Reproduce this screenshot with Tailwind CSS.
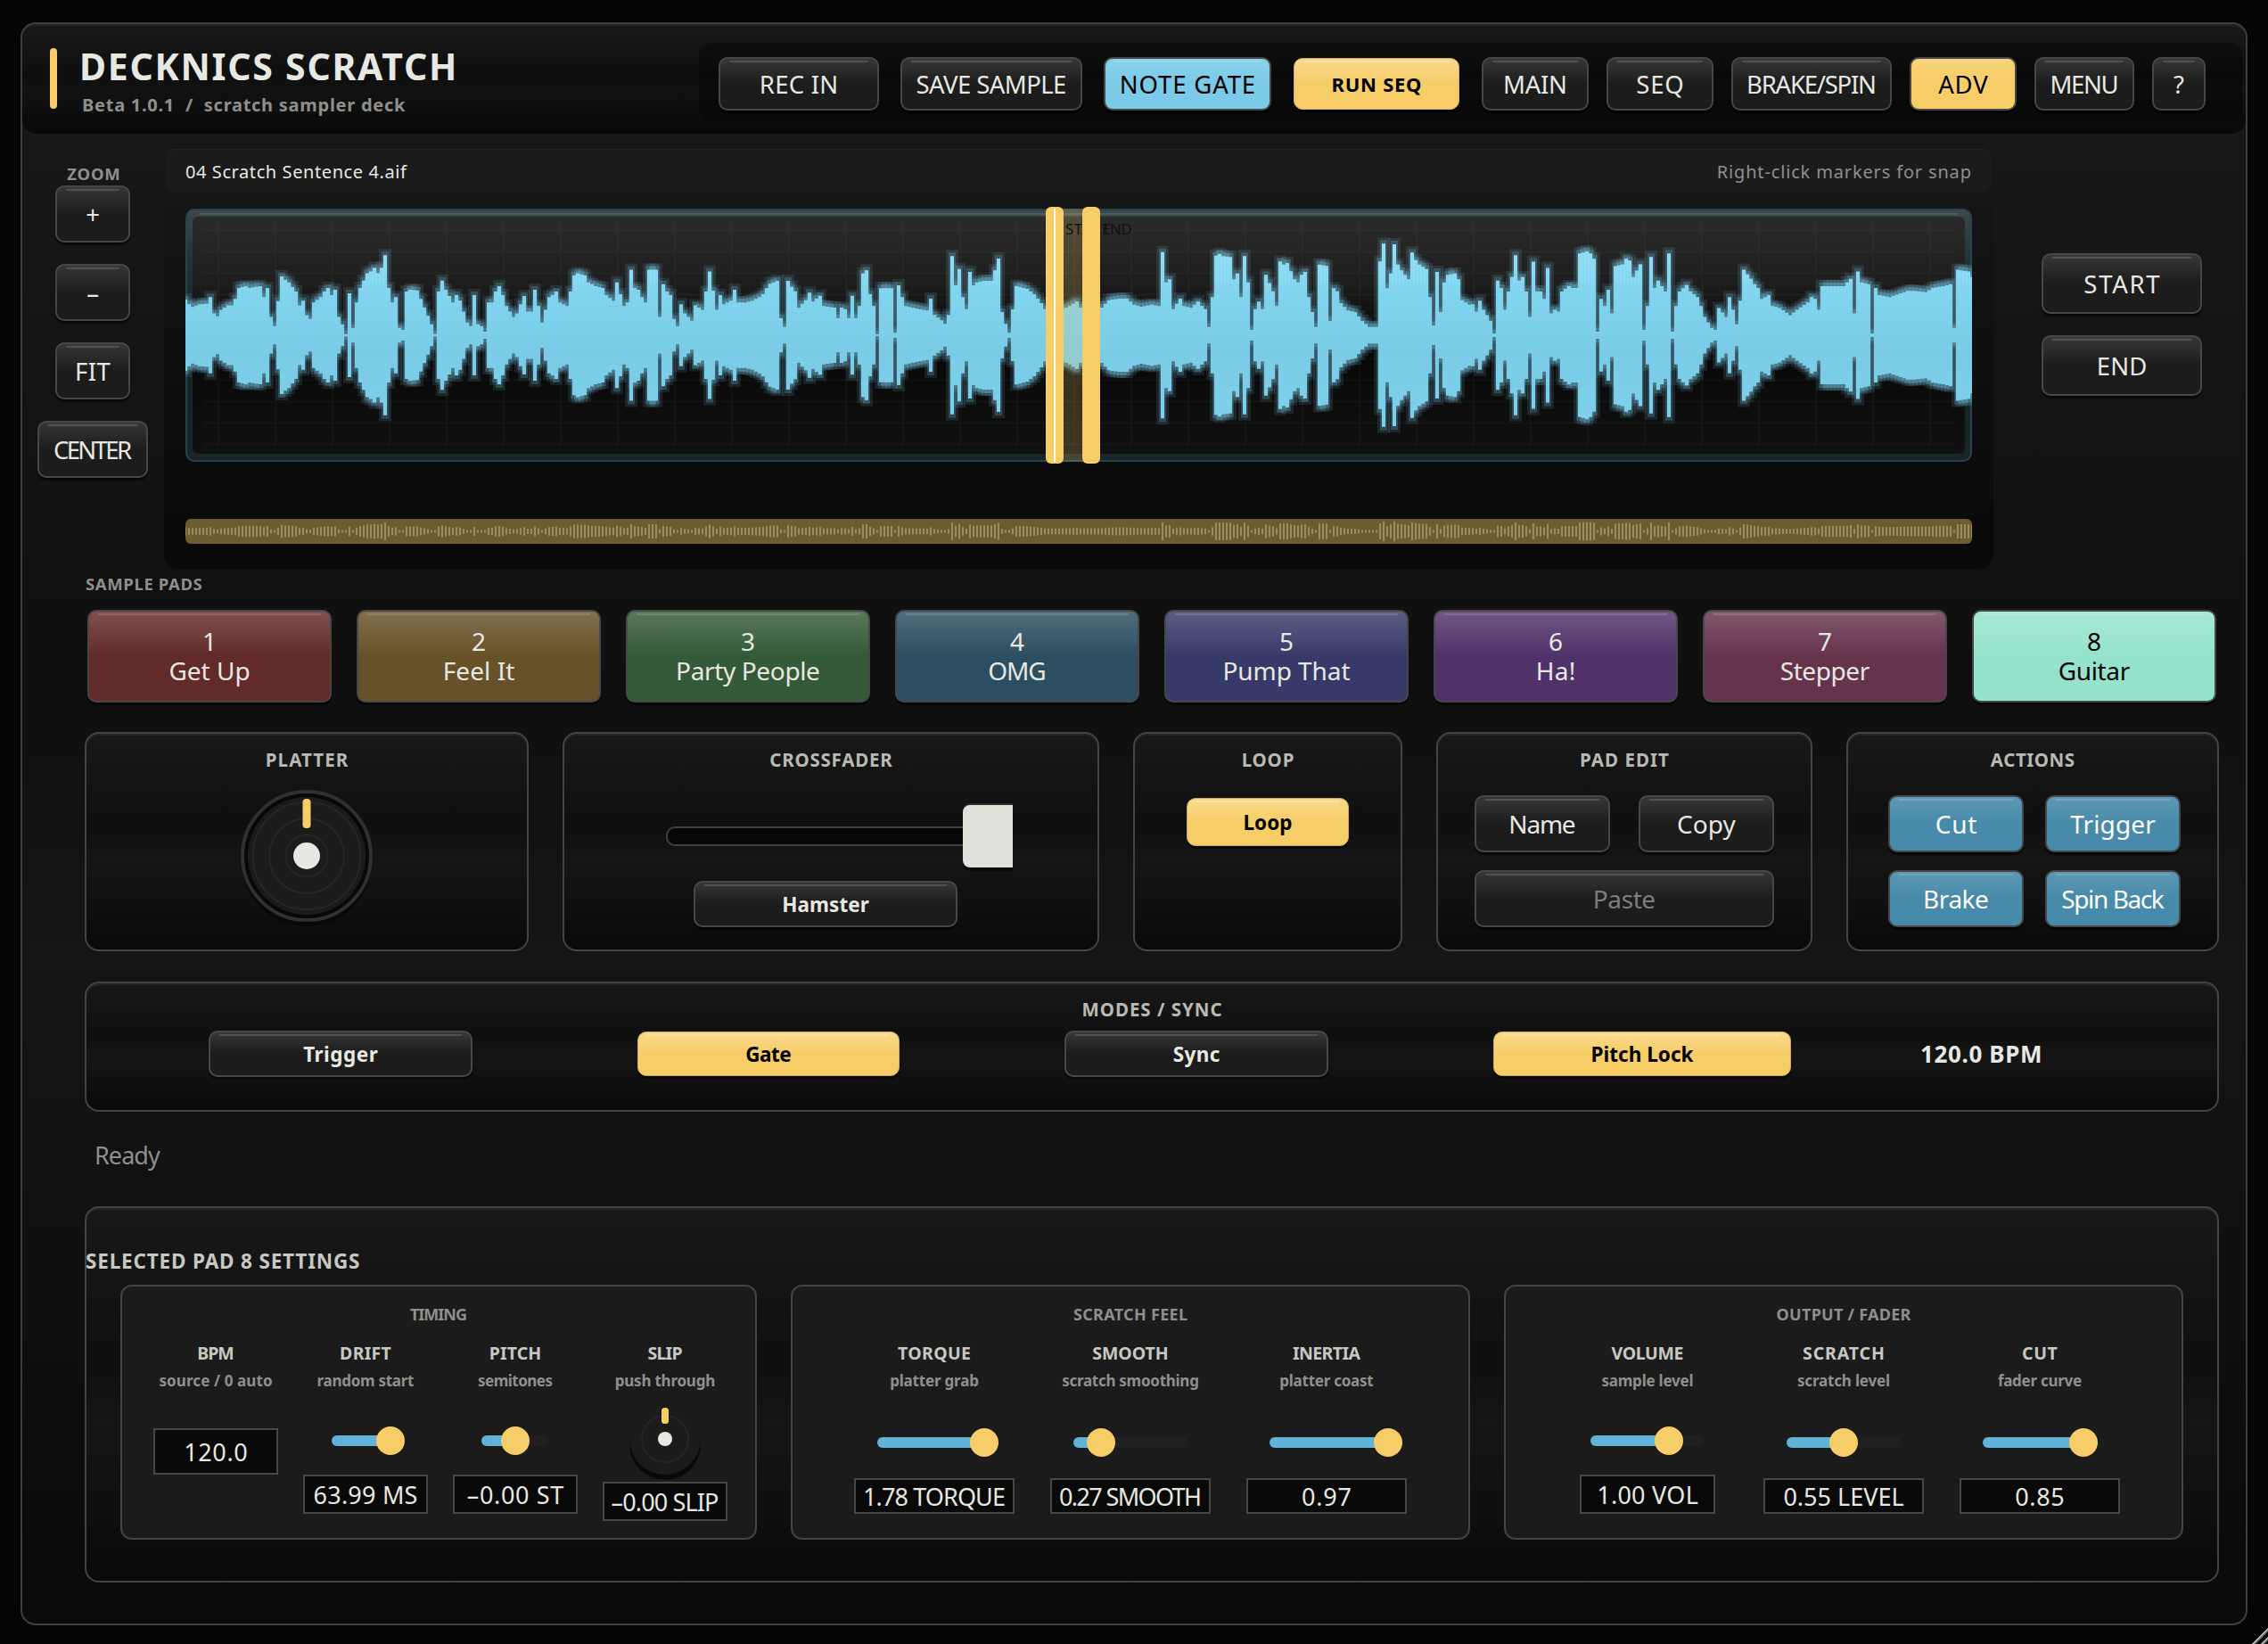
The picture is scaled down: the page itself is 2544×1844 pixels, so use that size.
<!DOCTYPE html>
<html lang="en">
<head>
<meta charset="utf-8">
<title>Decknics Scratch</title>
<script src="https://cdn.jsdelivr.net/npm/@tailwindcss/browser@4"></script>
</head>
<body class="relative w-[2544px] h-[1844px] overflow-hidden bg-[#050505] text-[#e8e8e2] font-['Noto_Sans','Open_Sans',sans-serif] whitespace-nowrap
  [&_button]:relative [&_button]:flex [&_button]:shrink-0 [&_button]:flex-col [&_button]:items-center [&_button]:justify-center [&_button]:rounded-[10px] [&_button]:border-2 [&_button]:border-[#474747] [&_button]:bg-[#1c1c1c] [&_button]:bg-linear-to-b [&_button]:from-white/12 [&_button]:to-transparent [&_button]:to-50% [&_button]:pt-[2px] [&_button]:shadow-[0_3px_1px_#00000090]
  [&_button]:before:absolute [&_button]:before:top-[2px] [&_button]:before:inset-x-[10px] [&_button]:before:h-[2px] [&_button]:before:bg-white/15
  [&_.lit]:m-px [&_.lit]:border [&_.lit]:border-[#cfac5c] [&_.lit]:bg-[#f7cd67] [&_.lit]:from-white/25 [&_.lit]:text-black [&_.lit]:before:bg-white/25">

<div class="mt-[25px] ml-[23px] flex h-[1798px] w-[2498px] flex-col rounded-[17px] border-2 border-[#3f3f3f] bg-[linear-gradient(#191919_0%,#0f0f0f_42%,#151515_58%,#0a0a0a_100%)]">

  <!-- header -->
  <header class="flex h-[123px] shrink-0 items-start rounded-[15px] border-t-2 border-[#262626] bg-[linear-gradient(#191919_0%,#0e0e0e_45%,#121212_58%,#090909_100%)]">
    <div class="mt-[25px] ml-[31px] h-[68px] w-[8px] rounded-full bg-[#f8cd68]"></div>
    <div class="mt-[25px] ml-[22px]">
      <h1 class="ml-[3px] text-[41px] leading-[40px] font-bold"><span data-w="417">DECKNICS SCRATCH</span></h1>
      <p class="mt-[12px] ml-[6px] text-[20px] leading-[24px] font-bold whitespace-pre text-[#8f8f8b]"><span data-w="362">Beta 1.0.1  /  scratch sampler deck</span></p>
    </div>
    <nav class="mt-[19px] mr-[4px] ml-auto flex h-[88px] w-[1731px] items-start rounded-[14px] bg-black/30 pt-[16px] pl-[22px] text-[27.5px]">
      <button class="h-[60px] w-[180px]"><span data-w="84.5">REC IN</span></button>
      <button class="ml-[24px] h-[60px] w-[204px]"><span data-w="166.5">SAVE SAMPLE</span></button>
      <button class="ml-[24px] h-[60px] w-[188px] bg-[#7bcae8]! text-black"><span data-w="149">NOTE GATE</span></button>
      <div class="ml-[24px] text-[22px] font-bold"><button class="lit h-[58px] w-[186px] pt-0!"><span data-w="99.5">RUN SEQ</span></button></div>
      <div class="ml-[24px] flex gap-[20px]">
        <button class="h-[60px] w-[120px]"><span data-w="68">MAIN</span></button>
        <button class="h-[60px] w-[120px]"><span data-w="51">SEQ</span></button>
        <button class="h-[60px] w-[180px]"><span data-w="142">BRAKE/SPIN</span></button>
        <button class="h-[60px] w-[120px] bg-[#f7cd67]! text-black"><span data-w="56">ADV</span></button>
        <button class="h-[60px] w-[112px]"><span data-w="73">MENU</span></button>
        <button class="h-[60px] w-[60px]"><span>?</span></button>
      </div>
    </nav>
  </header>

  <!-- waveform row -->
  <section class="mt-[16px] flex h-[472px] shrink-0">
    <div class="mr-[2px] flex w-[157px] flex-col items-center gap-[24px] pt-[19px] pl-[1px] text-[27.5px]">
      <div class="-mb-[21px] ml-[2px] text-[18.5px] leading-[20px] font-bold text-[#8f8f8b]"><span data-w="58">ZOOM</span></div>
      <button class="h-[64px] w-[84px]">+</button>
      <button class="h-[64px] w-[84px]">–</button>
      <button class="h-[64px] w-[84px]"><span data-w="37.5">FIT</span></button>
      <button class="h-[64px] w-[124px]"><span data-w="87">CENTER</span></button>
    </div>

    <div class="flex w-[2052px] flex-col rounded-[16px] bg-linear-to-b from-black/0 to-black/50">
      <div class="mx-[2px] mt-px flex h-[49px] items-center justify-between rounded-[10px] border-t border-[#252525] bg-[#1b1b1b] pt-[1px] pr-[23px] pl-[22px] text-[20px]">
        <span data-w="249">04 Scratch Sentence 4.aif</span>
        <span class="text-[#8f8f8b]" data-w="284">Right-click markers for snap</span>
      </div>
      <div class="relative mx-[24px] mt-[18px] h-[284px] rounded-[10px] border-2 border-[#274350] bg-[linear-gradient(#3c484b_0%,#253235_20%,#182123_50%,#1b2628_100%)]">
        <div class="mx-[6px] mt-[7px] h-[266px] rounded-[6px] bg-[linear-gradient(#2b2b2b_0%,#1d1d1d_28%,#070707_50%,#080808_60%,#111111_100%)]"></div>
        <div class="absolute top-[3px] right-[14px] left-[14px] h-[2px] bg-white/12"></div>
        <svg id="wave" class="absolute -top-[2px] -left-[2px] overflow-visible" width="2004" height="284" viewBox="208 234 2004 284">
          <defs>
            <linearGradient id="core" gradientUnits="userSpaceOnUse" x1="0" y1="280" x2="0" y2="472">
              <stop offset="0" stop-color="#96e2f8"/><stop offset=".25" stop-color="#83d6ef"/><stop offset=".6" stop-color="#7bcde7"/><stop offset="1" stop-color="#7fd2ec"/>
            </linearGradient>
            <clipPath id="frame"><rect x="208" y="234" width="2004" height="284" rx="10"/></clipPath>
          </defs>
          <path id="grid" stroke="#b8dcd8" stroke-opacity=".035" stroke-width="2" fill="none"/>
          <g clip-path="url(#frame)" fill="none">
            <g id="glow" stroke="#7bcae8" stroke-linecap="square"></g>
            <path class="env" stroke="url(#core)" stroke-width="4"/>
            <path class="env" stroke="#6fbfdc" stroke-opacity=".3" stroke-width="1"/>
          </g>
          <rect x="1183" y="234" width="41" height="284" fill="#f7cd67" fill-opacity=".2"/>
          <text x="1195" y="263" font-size="17" fill="#121212" textLength="50">START</text>
          <rect x="1173" y="232" width="20" height="288" rx="6" fill="#f7cd67"/>
          <rect x="1182" y="234" width="2" height="284" fill="#fff"/>
          <rect x="1214" y="232" width="20" height="288" rx="6" fill="#f7cd67"/>
          <text x="1236" y="263" font-size="17" fill="#121212" textLength="34">END</text>
        </svg>
      </div>
      <svg class="mx-[24px] mt-[64px] rounded-[6px] bg-[#6c5c30]" width="2004" height="28" viewBox="208 582 2004 28"><path id="mini" stroke="#998d63" stroke-width="2" fill="none"/></svg>
    </div>

    <div class="ml-[54px] flex flex-col gap-[24px] pt-[118px] text-[27.5px]">
      <button class="h-[68px] w-[180px]"><span data-w="84">START</span></button>
      <button class="h-[68px] w-[180px]"><span data-w="53.5">END</span></button>
    </div>
  </section>

  <div class="ml-[70px] flex w-[2394px] flex-col">
    <!-- pads -->
    <h2 class="mt-[7px] ml-[1px] text-[18.5px] leading-[20px] font-bold text-[#8f8f8b]"><span data-w="130.6">SAMPLE PADS</span></h2>
    <div class="mx-[3px] mt-[19px] grid grid-cols-8 gap-[28px] text-[28px] leading-[33px] [&_button]:h-[104px] [&_button]:from-white/18 [&_button]:pt-0!">
      <button class="bg-[#632a2a]!"><span>1</span><span data-w="89">Get Up</span></button>
      <button class="bg-[#675128]!"><span>2</span><span data-w="78.5">Feel It</span></button>
      <button class="bg-[#345a37]!"><span>3</span><span data-w="159">Party People</span></button>
      <button class="bg-[#2b4f60]!"><span>4</span><span data-w="63">OMG</span></button>
      <button class="bg-[#373a68]!"><span>5</span><span data-w="141">Pump That</span></button>
      <button class="bg-[#51316a]!"><span>6</span><span data-w="41">Ha!</span></button>
      <button class="bg-[#66334c]!"><span>7</span><span data-w="100">Stepper</span></button>
      <button class="bg-[#95e3cc]! text-black"><span>8</span><span data-w="80">Guitar</span></button>
    </div>

    <!-- control panels -->
    <div class="mt-[33px] flex gap-[38px] [&>section]:flex [&>section]:h-[246px] [&>section]:flex-col [&>section]:items-center [&>section]:rounded-[16px] [&>section]:border-2 [&>section]:border-[#444444] [&>section]:bg-[linear-gradient(#181818_0%,#0f0f0f_42%,#151515_58%,#0a0a0a_100%)] [&>section]:pt-[17px] [&>section]:shadow-[inset_0_2px_0_#252525] [&_h3]:text-[20.5px] [&_h3]:leading-[24px] [&_h3]:font-bold [&_h3]:text-[#b9b9b3]">
      <section class="w-[498px]">
        <h3><span data-w="92">PLATTER</span></h3>
        <svg class="mt-[22px] overflow-visible" width="148" height="148" viewBox="-74 -74 148 148" fill="none">
          <circle cy="6" r="73" fill="#080808"/>
          <circle r="72" fill="#080808" stroke="#303032" stroke-width="4"/>
          <circle r="66" fill="#1b1b1b"/>
          <g stroke="#262627" stroke-width="2"><circle r="60.500"/><circle r="42"/><circle r="23.500"/></g>
          <rect x="-4.500" y="-64" width="9" height="33" rx="4" fill="#f7cd67"/>
          <circle r="15" fill="#e8e8e2"/>
        </svg>
      </section>
      <section class="w-[602px]">
        <h3><span data-w="137">CROSSFADER</span></h3>
        <div class="mt-[39px] ml-[114px] flex h-[70px] items-start self-start">
          <div class="mt-[24px] h-[22px] w-[333px] rounded-l-[10px] border-2 border-r-0 border-[#3f3f41] bg-[#070707]"></div>
          <div class="h-[70px] w-[56px] rounded-l-[8px] bg-[#e1e1db] shadow-[0_4px_0_#0a0a0a,0_-2px_0_#2a2a2a]"></div>
        </div>
        <button class="mt-[15px] ml-[145px] h-[52px] w-[296px] self-start text-[22.5px] font-bold"><span data-w="95.5">Hamster</span></button>
      </section>
      <section class="w-[302px] text-[22.5px] font-bold">
        <h3><span data-w="57">LOOP</span></h3>
        <div class="mt-[30px]"><button class="lit h-[54px] w-[182px]"><span data-w="54">Loop</span></button></div>
      </section>
      <section class="w-[422px]">
        <h3><span data-w="99">PAD EDIT</span></h3>
        <div class="mt-[28px] grid w-[336px] grid-cols-2 gap-x-[32px] gap-y-[20px] text-[28px] [&_button]:h-[64px] [&_button]:pt-0!">
          <button><span data-w="72.5">Name</span></button>
          <button><span data-w="65.5">Copy</span></button>
          <button class="col-span-2 text-[#7d7d7a]"><span data-w="67.5">Paste</span></button>
        </div>
      </section>
      <section class="w-[418px]">
        <h3><span data-w="94">ACTIONS</span></h3>
        <div class="mt-[28px] ml-[45px] grid w-[328px] grid-cols-2 gap-x-[24px] gap-y-[20px] self-start text-[28px] text-white [&_button]:h-[64px] [&_button]:pt-0!">
          <button class="bg-[#488aaa]!"><span data-w="45.5">Cut</span></button>
          <button class="bg-[#488aaa]!"><span data-w="96">Trigger</span></button>
          <button class="bg-[#488aaa]!"><span data-w="71">Brake</span></button>
          <button class="bg-[#488aaa]!"><span data-w="114.5">Spin Back</span></button>
        </div>
      </section>
    </div>

    <!-- modes -->
    <section class="mt-[34px] flex h-[146px] flex-col rounded-[16px] border-2 border-[#444444] bg-[linear-gradient(#181818_0%,#0f0f0f_42%,#151515_58%,#0a0a0a_100%)] pt-[17px] font-bold shadow-[inset_0_2px_0_#252525]">
      <h3 class="text-center text-[20.5px] leading-[24px] text-[#b9b9b3]"><span data-w="156">MODES / SYNC</span></h3>
      <div class="mt-[12px] ml-[137px] flex items-center text-[22.5px]">
        <button class="h-[52px] w-[296px]"><span data-w="83.5">Trigger</span></button>
        <div class="ml-[184px]"><button class="lit h-[50px] w-[294px]"><span data-w="50">Gate</span></button></div>
        <button class="ml-[184px] h-[52px] w-[296px]"><span data-w="51">Sync</span></button>
        <div class="ml-[184px]"><button class="lit h-[50px] w-[334px]"><span data-w="114">Pitch Lock</span></button></div>
        <div class="ml-[144px] text-[26px] leading-none"><span data-w="134">120.0 BPM</span></div>
      </div>
    </section>

    <p class="mt-[33px] ml-[11px] text-[27px] leading-[32px] text-[#8f8f8b]"><span data-w="72">Ready</span></p>

    <!-- selected pad settings -->
    <section class="mt-[41px] h-[422px] rounded-[16px] border-2 border-[#444444] bg-[linear-gradient(#181818_0%,#0f0f0f_42%,#151515_58%,#0a0a0a_100%)] pt-[48px] shadow-[inset_0_2px_0_#252525]
      [&_h3]:mt-[21px] [&_h3]:text-center [&_h3]:text-[18px] [&_h3]:leading-[20px] [&_h3]:font-bold [&_h3]:text-[#8f8f8b]
      [&_h4]:mt-[24px] [&_h4]:text-[19.5px] [&_h4]:leading-[20px] [&_h4]:font-bold [&_h4]:text-[#c8c8c2]
      [&_p]:-mb-px [&_p]:mt-[11px] [&_p]:text-[17px] [&_p]:leading-[20px] [&_p]:font-bold [&_p]:text-[#8f8f8b]
      [&_output]:flex [&_output]:items-center [&_output]:justify-center [&_output]:border-2 [&_output]:border-[#474747] [&_output]:bg-[#090909] [&_output]:text-[27px] [&_output]:leading-none">
      <h2 class="-ml-[1px] text-[22.5px] leading-[24px] font-bold text-[#c8c8c2]"><span data-w="306">SELECTED PAD 8 SETTINGS</span></h2>
      <div class="mt-[14px] ml-[38px] flex gap-[38px] [&>div]:h-[286px] [&>div]:rounded-[13px] [&>div]:border-2 [&>div]:border-[#444444] [&>div]:bg-[#1b1b1b]">

        <div class="w-[714px]">
          <h3><span data-w="63">TIMING</span></h3>
          <div class="ml-[21px] flex [&>div]:flex [&>div]:w-[168px] [&>div]:flex-col [&>div]:items-center">
            <div>
              <h4><span data-w="39">BPM</span></h4><p><span data-w="126.5">source / 0 auto</span></p>
              <output class="mt-[44px] h-[52px] w-[140px]"><span data-w="69">120.0</span></output>
            </div>
            <div>
              <h4><span data-w="56.5">DRIFT</span></h4><p><span data-w="107.6">random start</span></p>
              <div class="relative mt-[42px] flex h-[32px] w-[76px] items-center"><i class="h-[12px] w-full rounded-[6px] bg-[#202020]"></i><i class="absolute h-[12px] rounded-[6px] bg-[#62b1d7]" style="width:66px"></i><i class="absolute -ml-[16px] size-[32px] rounded-full bg-[#f7cd67]" style="left:66px"></i></div>
              <output class="mt-[22px] h-[44px] w-[140px]"><span data-w="115">63.99 MS</span></output>
            </div>
            <div>
              <h4><span data-w="56.5">PITCH</span></h4><p><span data-w="83.5">semitones</span></p>
              <div class="relative mt-[42px] flex h-[32px] w-[76px] items-center"><i class="h-[12px] w-full rounded-[6px] bg-[#202020]"></i><i class="absolute h-[12px] rounded-[6px] bg-[#62b1d7]" style="width:38px"></i><i class="absolute -ml-[16px] size-[32px] rounded-full bg-[#f7cd67]" style="left:38px"></i></div>
              <output class="mt-[22px] h-[44px] w-[140px]"><span data-w="107.5">–0.00 ST</span></output>
            </div>
            <div>
              <h4><span data-w="39">SLIP</span></h4><p><span data-w="110.5">push through</span></p>
              <svg class="mt-[16px]" width="88" height="88" viewBox="-44 -40 88 88" fill="none">
                <circle cy="6" r="40" fill="#090909"/><circle r="40" fill="#1b1b1b"/>
                <circle r="26" stroke="#252525" stroke-width="2"/>
                <rect x="-4" y="-35" width="8" height="18" rx="3.500" fill="#f7cd67"/><circle r="8" fill="#e8e8e2"/>
              </svg>
              <output class="h-[44px] w-[140px]"><span data-w="118.5">–0.00 SLIP</span></output>
            </div>
          </div>
        </div>

        <div class="w-[762px]">
          <h3><span data-w="128">SCRATCH FEEL</span></h3>
          <div class="ml-[49px] flex [&>div]:flex [&>div]:w-[220px] [&>div]:flex-col [&>div]:items-center">
            <div>
              <h4><span data-w="81">TORQUE</span></h4><p><span data-w="98">platter grab</span></p>
              <div class="relative mt-[44px] flex h-[32px] w-[128px] items-center"><i class="h-[12px] w-full rounded-[6px] bg-[#202020]"></i><i class="absolute h-[12px] rounded-[6px] bg-[#62b1d7]" style="width:120px"></i><i class="absolute -ml-[16px] size-[32px] rounded-full bg-[#f7cd67]" style="left:120px"></i></div>
              <output class="mt-[24px] h-[40px] w-[180px]"><span data-w="157">1.78 TORQUE</span></output>
            </div>
            <div>
              <h4><span data-w="84.5">SMOOTH</span></h4><p><span data-w="153">scratch smoothing</span></p>
              <div class="relative mt-[44px] flex h-[32px] w-[128px] items-center"><i class="h-[12px] w-full rounded-[6px] bg-[#202020]"></i><i class="absolute h-[12px] rounded-[6px] bg-[#62b1d7]" style="width:31px"></i><i class="absolute -ml-[16px] size-[32px] rounded-full bg-[#f7cd67]" style="left:31px"></i></div>
              <output class="mt-[24px] h-[40px] w-[180px]"><span data-w="157">0.27 SMOOTH</span></output>
            </div>
            <div>
              <h4><span data-w="76.5">INERTIA</span></h4><p><span data-w="104">platter coast</span></p>
              <div class="relative mt-[44px] flex h-[32px] w-[128px] items-center"><i class="h-[12px] w-full rounded-[6px] bg-[#202020]"></i><i class="absolute h-[12px] rounded-[6px] bg-[#62b1d7]" style="width:128px"></i><i class="absolute -ml-[16px] size-[32px] rounded-full bg-[#f7cd67]" style="left:133px"></i></div>
              <output class="mt-[24px] h-[40px] w-[180px]"><span data-w="54.5">0.97</span></output>
            </div>
          </div>
        </div>

        <div class="w-[762px]">
          <h3><span data-w="151">OUTPUT / FADER</span></h3>
          <div class="ml-[49px] flex [&>div]:flex [&>div]:w-[220px] [&>div]:flex-col [&>div]:items-center">
            <div>
              <h4><span data-w="80">VOLUME</span></h4><p><span data-w="102">sample level</span></p>
              <div class="relative mt-[42px] flex h-[32px] w-[128px] items-center"><i class="h-[12px] w-full rounded-[6px] bg-[#202020]"></i><i class="absolute h-[12px] rounded-[6px] bg-[#62b1d7]" style="width:88px"></i><i class="absolute -ml-[16px] size-[32px] rounded-full bg-[#f7cd67]" style="left:88px"></i></div>
              <output class="mt-[22px] h-[44px] w-[152px]"><span data-w="111.5">1.00 VOL</span></output>
            </div>
            <div>
              <h4><span data-w="91">SCRATCH</span></h4><p><span data-w="103">scratch level</span></p>
              <div class="relative mt-[44px] flex h-[32px] w-[128px] items-center"><i class="h-[12px] w-full rounded-[6px] bg-[#202020]"></i><i class="absolute h-[12px] rounded-[6px] bg-[#62b1d7]" style="width:64px"></i><i class="absolute -ml-[16px] size-[32px] rounded-full bg-[#f7cd67]" style="left:64px"></i></div>
              <output class="mt-[24px] h-[40px] w-[180px]"><span data-w="134">0.55 LEVEL</span></output>
            </div>
            <div>
              <h4><span data-w="38.5">CUT</span></h4><p><span data-w="94">fader curve</span></p>
              <div class="relative mt-[44px] flex h-[32px] w-[128px] items-center"><i class="h-[12px] w-full rounded-[6px] bg-[#202020]"></i><i class="absolute h-[12px] rounded-[6px] bg-[#62b1d7]" style="width:113px"></i><i class="absolute -ml-[16px] size-[32px] rounded-full bg-[#f7cd67]" style="left:113px"></i></div>
              <output class="mt-[24px] h-[40px] w-[180px]"><span data-w="53">0.85</span></output>
            </div>
          </div>
        </div>
      </div>
    </section>
  </div>
</div>

<!-- window resize grip -->
<svg class="absolute right-0 bottom-0" width="24" height="24" viewBox="0 0 24 24" fill="none" stroke-width="1.500"><path d="M6 25 25 6M16 25 25 16" stroke="#d8d8d8"/><path d="M8 25 25 8M18 25 25 18" stroke="#777"/></svg>

<script>
// Envelope samples: x position, half height, in window pixels.
const seg = (s, f) => s.split(';').map(p => f(...p.trim().split(' ').map(Number)));
const samples = [
  ...seg('385 822;391 835;400 842;410 835;425 833;432 815;440 860;450 868;457 850;470 838;480 838;487 820;497 790;510 785;520 790;535 785;543 815;550 790;558 870;565 895;569 750;580 758;590 768;600 775;610 800;618 838;627 825;634 865;642 875;653 830;663 815;670 800;678 790;686 810;694 795;702 870;710 890;716 917;723 805;730 900;738 830;748 790;758 750;766 745;774 735;782 750;790 735;797 700;803 790;812 830;819 815;826 900;834 905;838 800;850 795;865 797;890 797;896 890;903 917;910 800;918 770;926 795;934 830;942 810;955 825;965 885;975 895;981 810;988 890;996 895;1003 910;1010 830;1018 830;1024 800;1034 785;1042 810;1050 840;1060 870;1068 860;1075 835;1088 812;1095 855;1103 855;1110 795;1118 860;1125 885;1136 815;1142 810;1150 800;1160 830;1175 840;1182 800;1187 755;1197 750;1207 755;1217 775;1230 785;1245 790;1255 810;1270 825;1280 775;1288 840;1298 830;1305 740;1312 790;1320 795;1328 815;1335 830;1345 740;1355 740;1363 870;1372 780;1380 800;1388 810;1397 875;1403 895;1412 835;1420 860;1430 880;1440 838;1452 850;1458 800;1465 745;1472 790;1480 850;1490 810;1500 835;1512 825;1520 795;1530 830;1545 830;1560 825', (x, y) => [x / 1.8447, (920 - y) / 2.45]),
  ...seg('0 400;8 390;20 370;30 355;42 345;52 470;57 500;66 345;75 365;82 380;92 435;102 410;110 385;120 415;138 395;148 430;165 435;175 470;182 435;193 440;200 470;208 395;216 470;222 430;228 320;236 310;244 390;252 430;262 525;270 370;283 370;293 370;299 520;305 265;312 360;320 400;328 430;350 438;370 445;380 405;388 460;400 478;410 490;418 460;427 262;434 360;443 305;452 400;459 440;467 315;474 360;484 350;500 345;510 345;520 310;529 270;537 450;545 490;550 520;555 360;570 362;590 372;605 390;620 420;634 440;650 440;670 440;685 430;698 415;710 435;725 435;745 435;760 435;775 410;793 405;810 405;825 425;845 432;865 425;880 430;890 248;898 350;906 340;914 440;930 405;940 430;955 435;965 415;975 430;985 440;992 500;1000 400;1007 260;1015 255;1025 262;1035 265;1042 350;1050 340;1056 320;1063 400;1070 262;1078 350;1085 510;1092 440;1098 415;1108 440;1120 325;1130 380;1137 430;1144 430;1152 280;1160 290;1168 285;1176 340;1185 350;1195 325;1207 315;1215 400;1222 450;1230 500;1237 290;1248 295;1254 470;1260 480;1266 370;1275 380;1283 420;1295 445;1315 450;1330 480;1345 500;1358 500;1365 280;1372 220;1380 370;1388 320;1398 222;1406 290;1418 310;1430 340;1438 250;1448 275;1458 290;1468 305;1476 400;1484 495;1492 315;1500 450;1508 350;1518 325;1530 320;1540 340;1552 410;1563 425', (x, y) => [850 + x / 1.96, (528 - y) / 3]),
  ...seg('19 835;25 855;36 825;45 850;55 880;63 915;70 770;78 790;84 850;90 800;97 760;105 700;112 770;118 760;125 800;130 870;138 718;145 800;152 800;158 820;165 735;172 860;180 850;190 855;196 800;205 785;215 790;222 790;228 695;240 690;250 695;258 710;262 910;270 820;277 840;285 795;291 860;296 880;300 730;310 725;320 710;328 715;335 760;344 725;350 870;357 905;362 840;368 705;375 790;385 770;392 800;399 695;405 850;410 910;416 840;425 800;435 782;445 800;455 815;465 840;475 870;485 900;492 905;500 845;510 870;520 815;527 850;534 890;540 825;550 740;560 765;568 780;578 790;586 820;594 810;602 840;620 845;640 865;655 850;670 830;680 815;690 820;697 850;703 785;720 785;740 785;753 765;760 840;765 860;773 745;780 775;788 780;795 905;799 915;805 790;812 810;830 815;850 805;865 798;880 798;900 802;915 790;935 785;950 780;957 900;963 740;985 745;991 760', (x, y) => [1640 + x / 1.7345, (920 - y) / 2.45]),
];
// One bar every 4px; bars without a sample are interpolated from their neighbours.
const N = 502, bars = new Array(N).fill(null);
samples.forEach(([x, h]) => {
  const i = Math.max(0, Math.min(N - 1, Math.round((x - 208) / 4)));
  if (bars[i] === null || Math.abs(h - 46) > Math.abs(bars[i] - 46)) bars[i] = h;
});
for (let i = 0, last = 0; i < N; i++) {
  if (bars[i] !== null) { last = i; continue; }
  let j = i; while (j < N && bars[j] === null) j++;
  const a = bars[last] ?? 35, b = bars[j] ?? a;
  for (let n = i; n < j; n++) bars[n] = a + (b - a) * (n - last) / (j - last);
}
let all = '', mini = '';
const groups = ['', '', '', ''];
bars.forEach((v, i) => {
  const x = 208 + i * 4, h = Math.max(1, v), m = Math.max(1.5, v * .11), d = `M${x} ${376 - h}V${376 + h}`;
  all += d; groups[i % 4] += d;
  mini += `M${x} ${596 - m}V${596 + m}`;
});
document.querySelectorAll('.env').forEach(p => p.setAttribute('d', all));
document.getElementById('glow').innerHTML = groups.map(d => `<path d="${d}" stroke-width="14" stroke-opacity=".13"/><path d="${d}" stroke-width="8" stroke-opacity=".22"/>`).join('');
document.getElementById('mini').setAttribute('d', mini);
let grid = '';
for (let x = 245; x < 2180; x += 64) grid += `M${x} 250V502`;
for (let y = 258.5; y < 505; y += 24) grid += `M228 ${y}H2192`;
document.getElementById('grid').setAttribute('d', grid);

// Labels with data-w are tracked so that their ink fills that width.
const ctx = document.createElement('canvas').getContext('2d');
function track() {
  document.querySelectorAll('[data-w]').forEach(el => {
    const s = getComputedStyle(el), t = el.textContent;
    ctx.font = `${s.fontWeight} ${s.fontSize} ${s.fontFamily}`;
    const m = ctx.measureText(t);
    const ls = (el.dataset.w - m.actualBoundingBoxLeft - m.actualBoundingBoxRight) / (t.length - 1);
    el.style.letterSpacing = ls + 'px';
    el.style.marginRight = -ls + 'px';
  });
}
addEventListener('load', () => { track(); requestAnimationFrame(track); });
</script>
</body>
</html>
